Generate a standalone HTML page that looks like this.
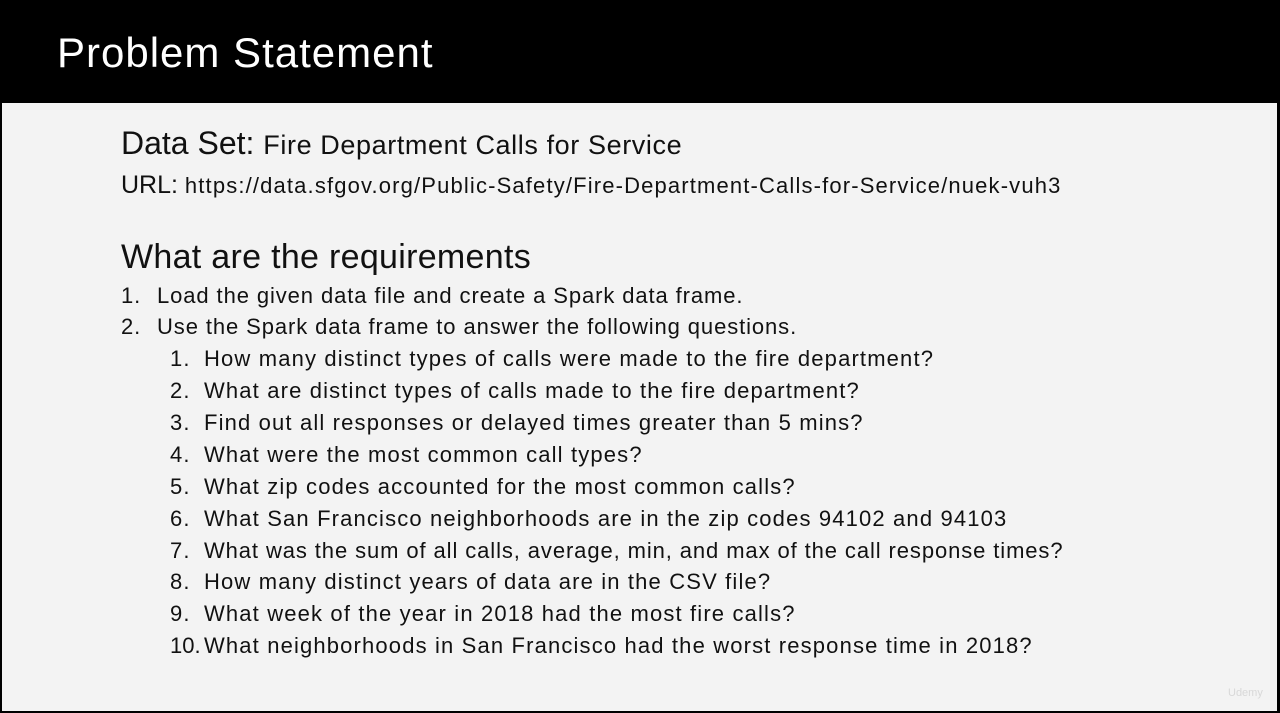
<!DOCTYPE html>
<html><head><meta charset="utf-8"><style>
html,body{margin:0;padding:0}
body{width:1280px;height:713px;background:#000;position:relative;overflow:hidden;font-family:"Liberation Sans",sans-serif;color:#111}
#bg{position:absolute;left:2px;top:103px;width:1275px;height:608px;background:#f3f3f3}
.t{position:absolute;white-space:nowrap;line-height:32px}
h1{position:absolute;left:57px;top:28px;margin:0;font-weight:normal;color:#fff;font-size:42px;line-height:50px;letter-spacing:1px}
</style></head><body>
<div id="bg"></div>
<h1>Problem Statement</h1>
<div class="t" style="left:121px;top:127px;font-size:32px">Data Set: <span style="font-size:27px;letter-spacing:0.6px">Fire Department Calls for Service</span></div>
<div class="t" style="left:121px;top:169px;font-size:25px">URL: <span style="font-size:22px;letter-spacing:1.15px">https://data.sfgov.org/Public-Safety/Fire-Department-Calls-for-Service/nuek-vuh3</span></div>
<div class="t" style="left:121px;top:241px;font-size:34px;letter-spacing:0.3px">What are the requirements</div>
<div style="font-size:22px;letter-spacing:0.9px">
<div class="t" style="left:121px;top:280px">1.</div><div class="t" style="left:157px;top:280px">Load the given data file and create a Spark data frame.</div>
<div class="t" style="left:121px;top:311px">2.</div><div class="t" style="left:157px;top:311px">Use the Spark data frame to answer the following questions.</div>
</div>
<div style="font-size:22px;letter-spacing:1.15px">
<div class="t" style="left:170px;top:343px">1.</div><div class="t" style="left:204px;top:343px">How many distinct types of calls were made to the fire department?</div>
<div class="t" style="left:170px;top:375px">2.</div><div class="t" style="left:204px;top:375px">What are distinct types of calls made to the fire department?</div>
<div class="t" style="left:170px;top:407px">3.</div><div class="t" style="left:204px;top:407px">Find out all responses or delayed times greater than 5 mins?</div>
<div class="t" style="left:170px;top:439px">4.</div><div class="t" style="left:204px;top:439px">What were the most common call types?</div>
<div class="t" style="left:170px;top:471px">5.</div><div class="t" style="left:204px;top:471px">What zip codes accounted for the most common calls?</div>
<div class="t" style="left:170px;top:503px">6.</div><div class="t" style="left:204px;top:503px">What San Francisco neighborhoods are in the zip codes 94102 and 94103</div>
<div class="t" style="left:170px;top:535px;">7.</div><div class="t" style="left:204px;top:535px;letter-spacing:0.9px">What was the sum of all calls, average, min, and max of the call response times?</div>
<div class="t" style="left:170px;top:566px">8.</div><div class="t" style="left:204px;top:566px">How many distinct years of data are in the CSV file?</div>
<div class="t" style="left:170px;top:598px">9.</div><div class="t" style="left:204px;top:598px">What week of the year in 2018 had the most fire calls?</div>
<div class="t" style="left:170px;top:630px;letter-spacing:0">10.</div><div class="t" style="left:204px;top:630px">What neighborhoods in San Francisco had the worst response time in 2018?</div>
</div>
<div class="t" style="left:1228px;top:686px;font-size:11px;line-height:14px;color:#d8d8d8">Udemy</div>
</body></html>
